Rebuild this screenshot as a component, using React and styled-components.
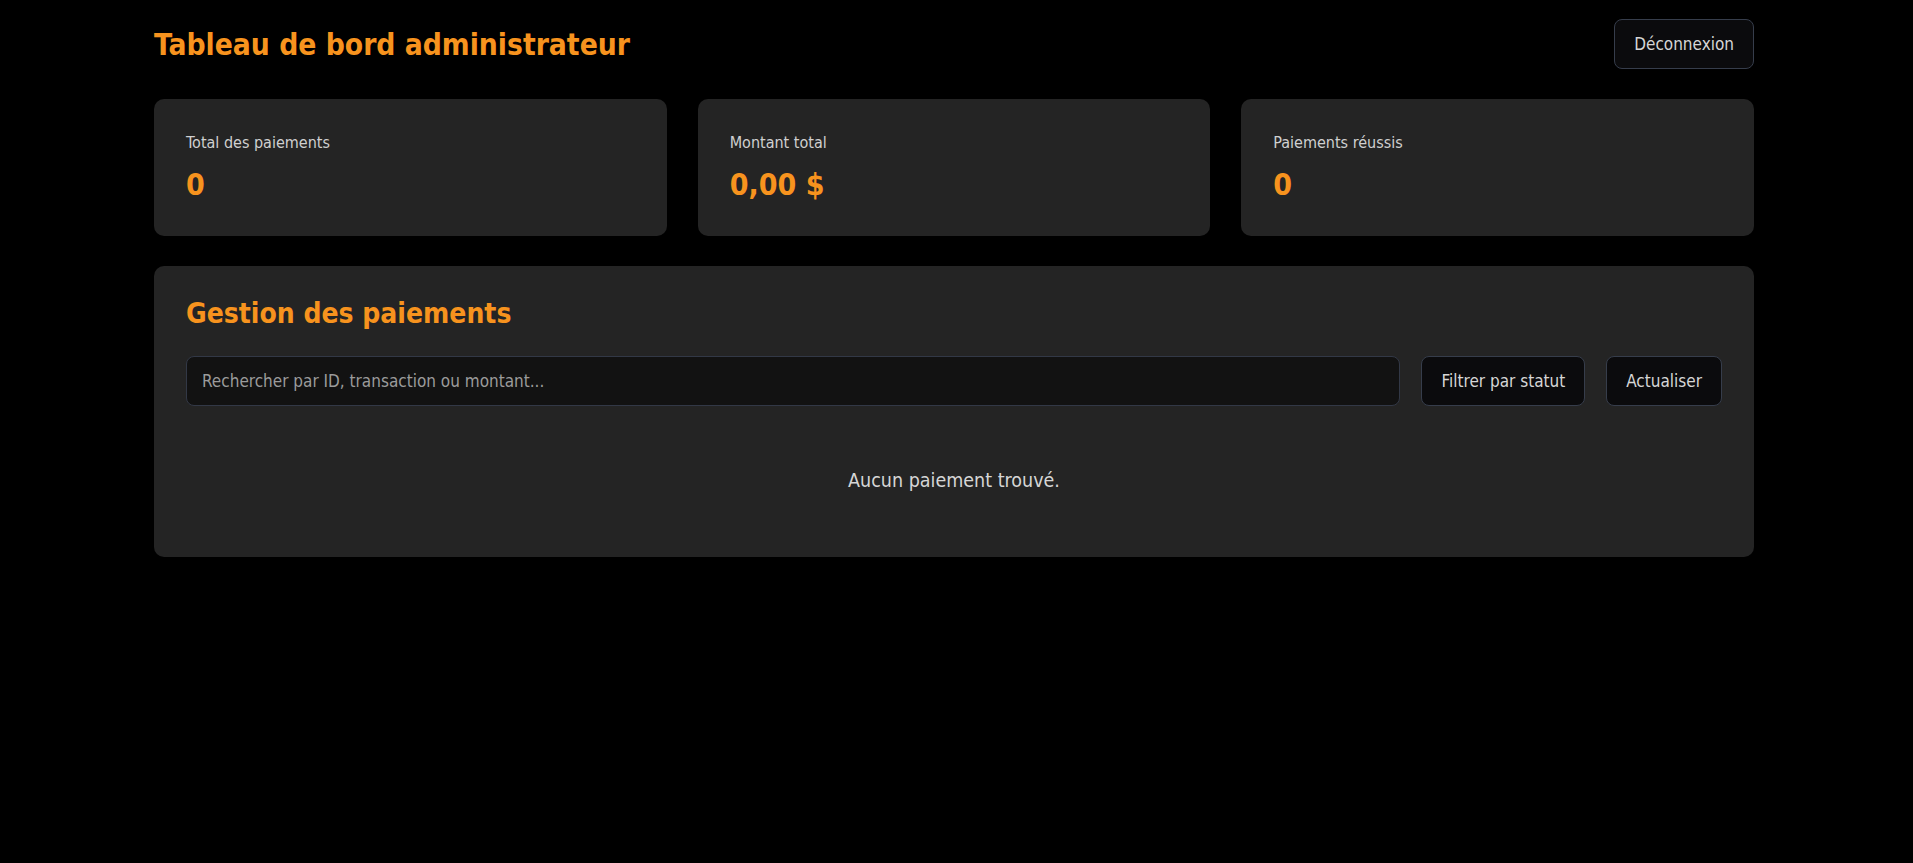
import React, { useState } from 'react'
import styled, { createGlobalStyle } from 'styled-components'

const GlobalStyle = createGlobalStyle`
  html, body {
    margin: 0;
    background: #000;
  }
  body {
    font-family: Tahoma, "DejaVu Sans Condensed", "DejaVu Sans", sans-serif;
    color: #d6d6d6;
  }
  * {
    box-sizing: border-box;
  }
`

const Root = styled.div`
  padding: 19px 5px 40px 0;
`

const Page = styled.div`
  max-width: 1600px;
  margin: 0 auto;
`

const Header = styled.header`
  display: flex;
  align-items: center;
  justify-content: space-between;
  margin-bottom: 30px;
`

const Title = styled.h1`
  margin: 0;
  font-size: 29.7px;
  font-weight: 700;
  color: #f7931e;
`

const Button = styled.button`
  font-family: inherit;
  font-size: 17px;
  line-height: 24px;
  color: #d6d6d6;
  background: #0b0b0d;
  border: 1px solid #363d4b;
  border-radius: 8px;
  padding: 12px 19px;
  cursor: pointer;
  white-space: nowrap;
`

const Stats = styled.div`
  display: grid;
  grid-template-columns: repeat(3, 1fr);
  gap: 31px;
  margin-bottom: 30px;
`

const Card = styled.div`
  background: #242424;
  border-radius: 10px;
  padding: 32px;
`

const Panel = styled(Card)`
  padding-bottom: 62px;
`

const StatLabel = styled.div`
  font-size: 16px;
  line-height: 24px;
  color: #d0d0d0;
  margin-bottom: 10px;
`

const StatValue = styled.div`
  font-size: 30px;
  line-height: 39px;
  font-weight: 700;
  color: #f7931e;
`

const SectionTitle = styled.h2`
  margin: 0 0 26px;
  font-size: 28px;
  line-height: 32px;
  font-weight: 700;
  color: #f7931e;
`

const Toolbar = styled.div`
  display: flex;
  gap: 21px;
  align-items: stretch;
`

const Search = styled.input`
  flex: 1;
  font-family: inherit;
  font-size: 17px;
  line-height: 24px;
  color: #d6d6d6;
  background: #121212;
  border: 1px solid #323846;
  border-radius: 8px;
  padding: 12px 15px;
  outline: none;

  &::placeholder {
    color: #9b9b9b;
  }
`

const Empty = styled.p`
  margin: 61px 0 0;
  text-align: center;
  font-size: 19.5px;
  line-height: 28px;
  color: #d6d6d6;
`

const stats = [
  { label: 'Total des paiements', value: '0' },
  { label: 'Montant total', value: '0,00 $' },
  { label: 'Paiements réussis', value: '0' },
]

export default function App() {
  const [query, setQuery] = useState('')

  return (
    <Root>
      <GlobalStyle />
      <Page>
        <Header>
          <Title>Tableau de bord administrateur</Title>
          <Button>Déconnexion</Button>
        </Header>

        <Stats>
          {stats.map((s) => (
            <Card key={s.label}>
              <StatLabel>{s.label}</StatLabel>
              <StatValue>{s.value}</StatValue>
            </Card>
          ))}
        </Stats>

        <Panel>
          <SectionTitle>Gestion des paiements</SectionTitle>
          <Toolbar>
            <Search
              placeholder="Rechercher par ID, transaction ou montant..."
              value={query}
              onChange={(e) => setQuery(e.target.value)}
            />
            <Button>Filtrer par statut</Button>
            <Button>Actualiser</Button>
          </Toolbar>
          <Empty>Aucun paiement trouvé.</Empty>
        </Panel>
      </Page>
    </Root>
  )
}
